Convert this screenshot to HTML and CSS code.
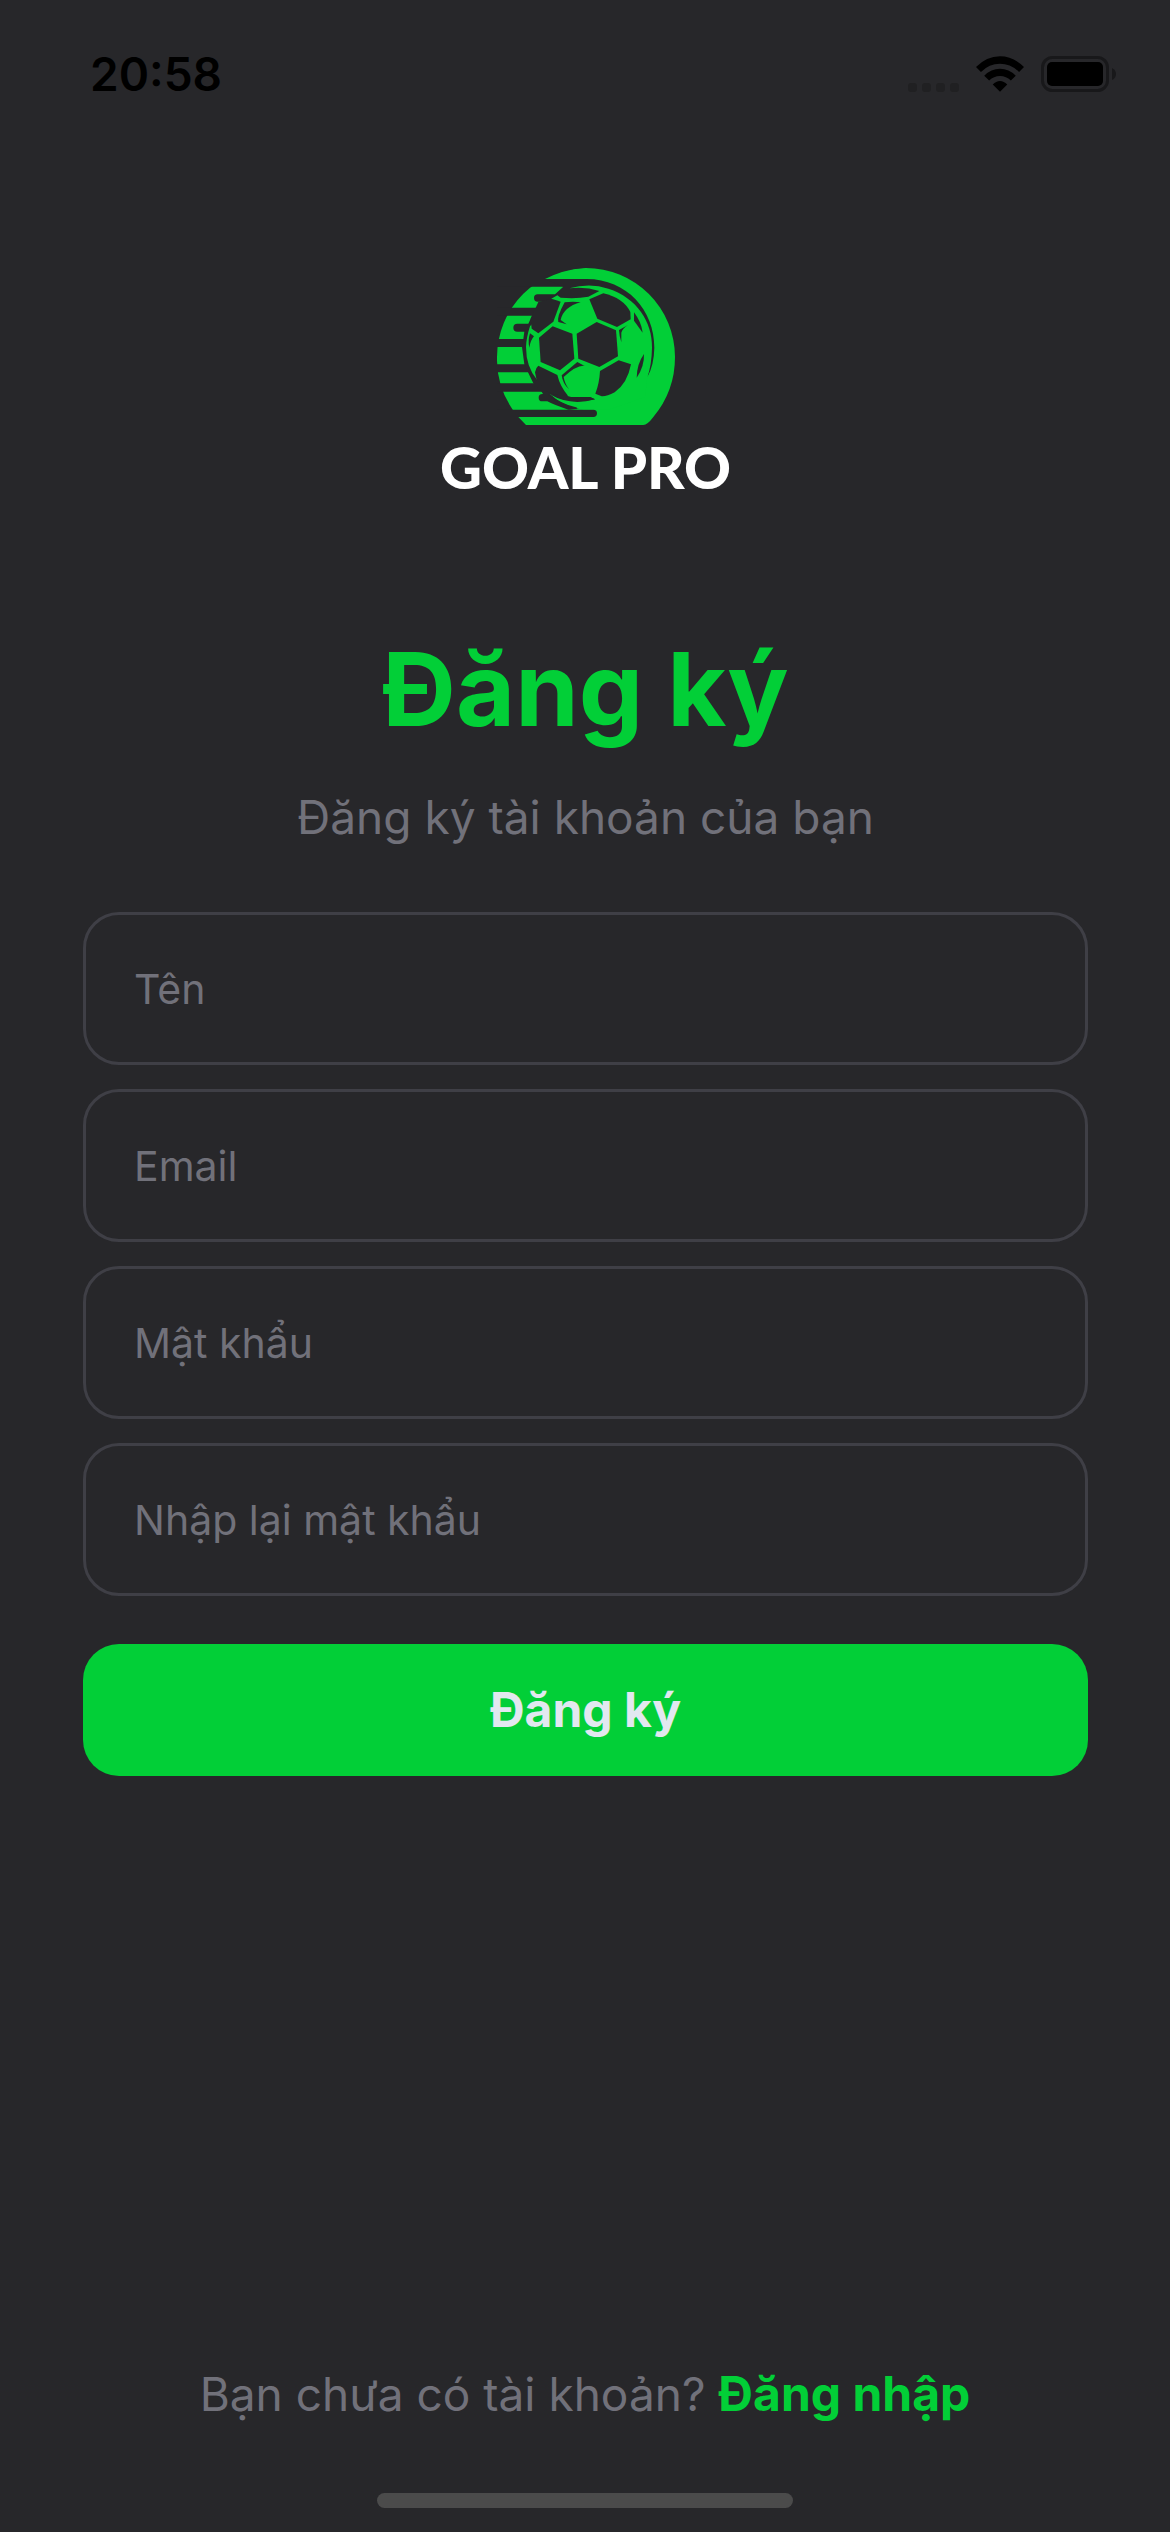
FILE: index.html
```html
<!DOCTYPE html>
<html lang="vi">
<head>
  <meta charset="utf-8">
  <meta name="viewport" content="width=device-width, initial-scale=1">
  <title>Goal Pro – Đăng ký</title>
  <link rel="stylesheet" href="styles.css">
</head>
<body>
  <div class="screen">
    <header class="status-bar">
      <time class="status-time">20:58</time>
      <div class="status-icons">
        <svg class="icon-signal" viewBox="0 0 51 9" aria-hidden="true">
          <rect x="0" width="9" height="9" rx="3"/>
          <rect x="14" width="9" height="9" rx="3"/>
          <rect x="28" width="9" height="9" rx="3"/>
          <rect x="42" width="9" height="9" rx="3"/>
        </svg>
        <svg class="icon-wifi" viewBox="0 0 146 108" aria-hidden="true">
          <path d="M0 33Q32 0 73 0Q114 0 146 33L131 48Q106 23 73 23Q40 23 15 48Z"/>
          <path d="M25 59Q46 38 73 38Q100 38 121 59L106 74Q92 60 73 60Q54 60 40 74Z"/>
          <path d="M51 86Q61 75 73 75Q85 75 95 86L73 108Z"/>
        </svg>
        <svg class="icon-battery" viewBox="0 0 75 36" aria-hidden="true">
          <rect class="battery-shell" x="1.5" y="1.5" width="65" height="33" rx="10"/>
          <rect x="6" y="6" width="56" height="24" rx="5"/>
          <path class="battery-cap" d="M71 12Q75 14 75 18Q75 22 71 24Z"/>
        </svg>
      </div>
    </header>

    <main class="content">
      <div class="brand">
        <svg class="brand-mark" viewBox="221 53 534 471" aria-hidden="true">
          <!-- badge -->
          <path class="lit" d="M308 524L285 500A270 270 0 0 1 221 320A267 267 0 0 1 488 53A267 267 0 0 1 755 320Q755 422 690 500Q672 524 660 524Z"/>
          <!-- speed stripes -->
          <path class="cut" d="M200 40H480V53Q420 58 365 86H490V109H200ZM200 172H345V196H200ZM200 266H330V290H200ZM200 342H330V366H200ZM200 399H420V424H200ZM200 478H510A11 11 0 0 1 510 500H200Z"/>
          <!-- gap around the ball -->
          <path class="cut" d="M365 86H490C610 86 694 180 693 292Q692 345 672 380Q680 345 681 292L660 400L520 440L515 450Q475 480 435 478Q390 463 372 453H357A11 11 0 0 1 357 431H359L355 424L330 399L314 366L303 342L296 290L300 266L303 244H282A12 12 0 0 1 282 220H315L326 196L345 172L361 154H343A11 11 0 0 1 343 132H395L420 109Z"/>
          <!-- ball -->
          <path class="lit" d="M438 114Q500 97 555 115C640 142 688 215 686 292Q685 345 672 380L665 440L560 477H480Q420 470 378 430Q440 464 515 447L500 440H432Q400 420 342 390Q308 350 308 290Q309 262 320 228L345 200L384 145L402 135L412 142Q460 146 495 139L528 122Q485 108 438 114Z"/>
          <!-- dark panels -->
          <path class="cut" d="M347 262L388 228L447 250L453 325L410 360L352 335Z"/>
          <path class="cut" d="M460 250L520 215L578 240L584 318L528 350L465 325Z"/>
          <path class="cut" d="M498 147L540 129Q600 143 621 185L622 207L581 230L522 205Z"/>
          <path class="cut" d="M530 362L586 330L623 342Q612 400 574 426Q550 439 535 438L516 430Q528 400 530 362Z"/>
          <path class="cut" d="M384 145Q400 150 412 154L390 214L345 249L325 235L322 205L345 155Z"/>
          <path class="cut" d="M345 346L402 374Q410 408 434 436L415 440L372 424L340 390L335 366Q337 352 345 346Z"/>
          <!-- shading on the lit panels -->
          <path class="cut" d="M424 156Q450 153 472 156Q420 170 412 209L430 222L405 215Q400 200 424 156Z"/>
          <path class="cut" d="M415 375L462 335L484 347Q462 343 421 380Q424 400 437 417Q418 400 415 375Z"/>
          <path class="cut" d="M587 239L614 224Q597 235 594 247V276Q588 258 587 239Z"/>
          <path class="cut" d="M632 186Q654 215 658 247L632 211Z"/>
          <path class="cut" d="M662 311Q663 350 640 382Q641 340 662 311Z"/>
          <path class="cut" d="M320 249L332 258Q321 270 318 292Q313 270 320 249Z"/>
          <path class="cut" d="M380 432Q440 468 515 447L500 440Q460 448 430 436Z"/>
          <path class="seam" d="M377 433Q410 464 460 474"/>
        </svg>
        <p class="brand-name">GOAL PRO</p>
      </div>

      <h1 class="title">Đăng ký</h1>
      <p class="subtitle">Đăng ký tài khoản của bạn</p>

      <form class="form">
        <input class="field" type="text" name="name" placeholder="Tên" aria-label="Tên">
        <input class="field" type="email" name="email" placeholder="Email" aria-label="Email">
        <input class="field" type="password" name="password" placeholder="Mật khẩu" aria-label="Mật khẩu">
        <input class="field" type="password" name="confirm" placeholder="Nhập lại mật khẩu" aria-label="Nhập lại mật khẩu">
        <button class="submit" type="submit">Đăng ký</button>
      </form>
    </main>

    <footer class="footer">
      <p class="login-prompt">Bạn chưa có tài khoản? <a class="login-link" href="#login">Đăng nhập</a></p>
      <div class="home-indicator"></div>
    </footer>
  </div>
</body>
</html>
```
FILE: styles.css
```css
:root {
  --bg: #27272a;
  --green: #02cf37;
  --muted: #71717a;
  --line: #3f3f46;
}

* {
  box-sizing: border-box;
}

body {
  margin: 0;
  background: var(--bg);
  color: var(--muted);
  font-family: "Inter", "Liberation Sans", sans-serif;
  font-size: 46px;
  line-height: 56px;
}

h1,
p {
  margin: 0;
}

.screen {
  display: flex;
  flex-direction: column;
  min-height: 100vh;
}

.status-bar {
  display: flex;
  justify-content: space-between;
  align-items: center;
  padding: 46px 54px 0 90px;
  color: #000;
}

.status-time {
  font-weight: 600;
}

.status-icons {
  display: flex;
  align-items: flex-end;
  gap: 17px;
}

.icon-signal {
  width: 51px;
  height: 9px;
  fill: #202022;
}

.icon-wifi {
  width: 48px;
  height: 36px;
}

.icon-battery {
  width: 75px;
  height: 36px;
}

.battery-shell {
  fill: none;
  stroke: #18181a;
  stroke-width: 3;
}

.battery-cap {
  fill: #18181a;
}

.content {
  display: flex;
  flex-direction: column;
  padding: 166px 82px 64px 83px;
  text-align: center;
}

.brand {
  display: flex;
  flex-direction: column;
  align-items: center;
  gap: 8px;
}

.brand-mark {
  width: 178px;
  height: 157px;
}

.lit {
  fill: var(--green);
}

.cut {
  fill: var(--bg);
}

.seam {
  fill: none;
  stroke: var(--bg);
  stroke-width: 5;
}

.brand-name {
  color: #fff;
  font-family: "Lato", "Inter", sans-serif;
  font-size: 58px;
  font-weight: 900;
  line-height: 68px;
}

.title {
  margin-top: 126px;
  color: var(--green);
  font-size: 102px;
  font-weight: 700;
  line-height: 124px;
}

.subtitle {
  margin-top: 38px;
}

.form {
  display: flex;
  flex-direction: column;
  gap: 24px;
  margin-top: 67px;
}

.field {
  width: 100%;
  height: 153px;
  padding: 0 48px;
  border: 3px solid var(--line);
  border-radius: 36px;
  background: transparent;
  color: #fff;
  font: inherit;
  font-size: 41px;
}

.field::placeholder {
  color: var(--muted);
  opacity: 1;
}

.submit {
  height: 132px;
  margin-top: 24px;
  border: 0;
  border-radius: 36px;
  background: var(--green);
  color: #e2e8f0;
  font: inherit;
  font-size: 48px;
  font-weight: 700;
}

.footer {
  display: flex;
  flex-direction: column;
  align-items: center;
  gap: 70px;
  margin-top: auto;
  padding-bottom: 24px;
}

.login-prompt {
  line-height: 58px;
}

.login-link {
  color: var(--green);
  font-size: 48px;
  font-weight: 700;
  text-decoration: none;
}

.home-indicator {
  width: 416px;
  max-width: 60%;
  height: 15px;
  border-radius: 8px;
  background: #4b4b4b;
}
```
